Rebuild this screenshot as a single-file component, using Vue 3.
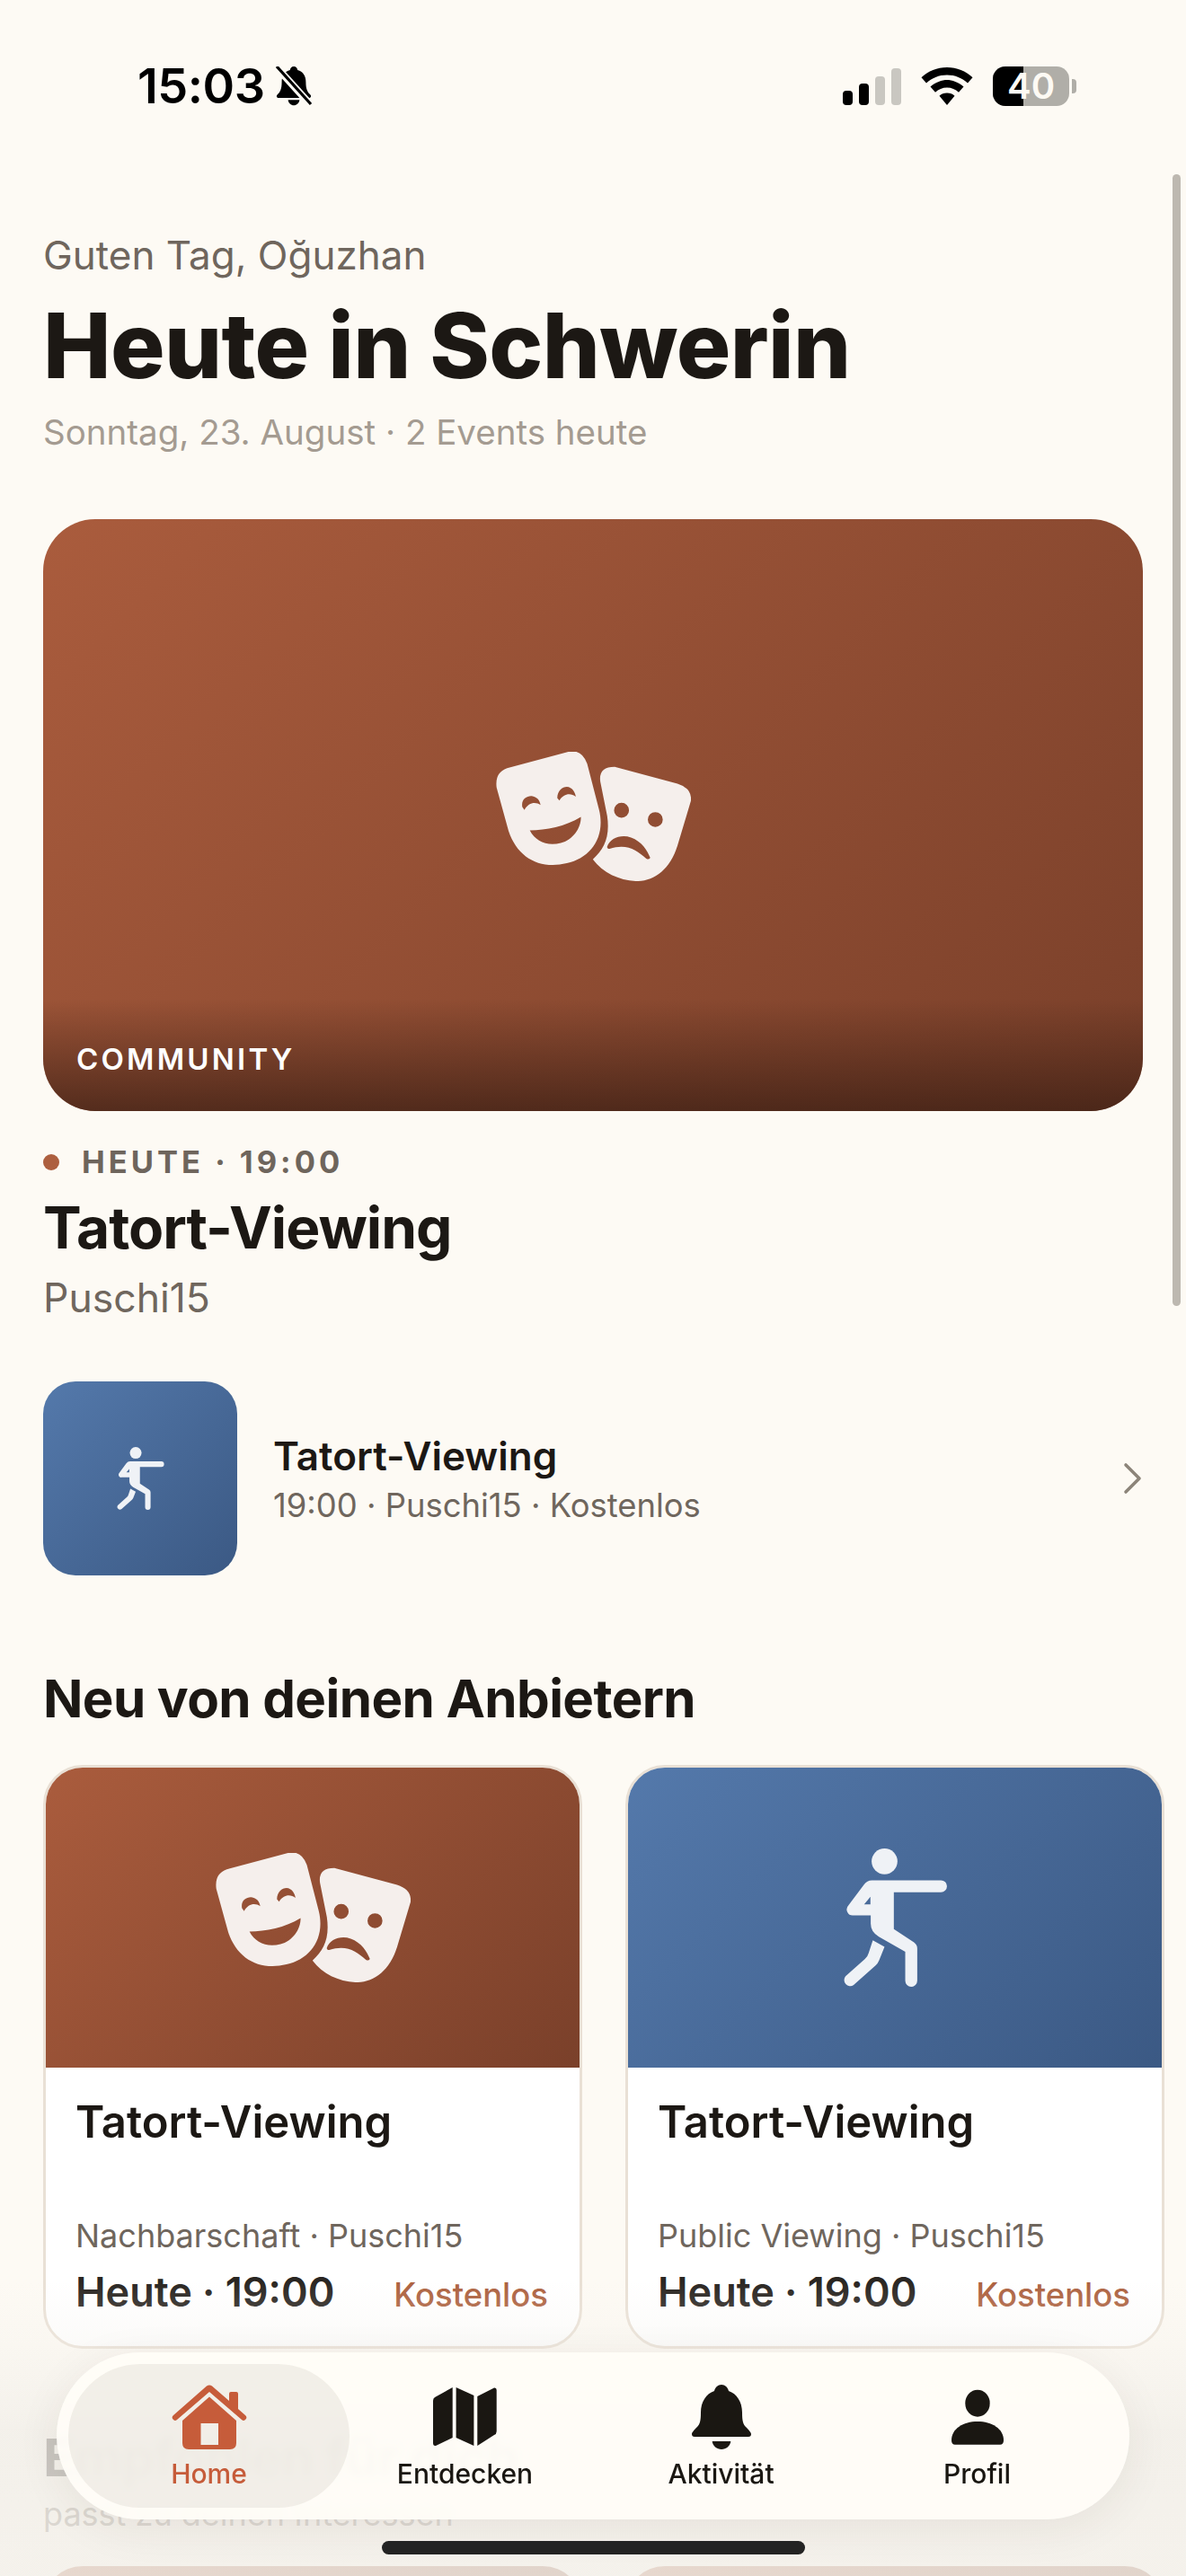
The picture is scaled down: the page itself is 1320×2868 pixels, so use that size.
<script setup>
const cards = [
  { cls: 'terra', title: 'Tatort-Viewing', meta: 'Nachbarschaft · Puschi15', icon: 'masks' },
  { cls: 'blue', title: 'Tatort-Viewing', meta: 'Public Viewing · Puschi15', icon: 'runner' },
]
</script>

<template>
  <div class="phone">
    <svg width="0" height="0" class="defs" aria-hidden="true">
      <defs>
        <symbol id="masks" viewBox="153 115 652 433">
          <path fill-rule="evenodd" d="M190 170 L395 115 Q440 105 458 155 L498 310 C520 400 470 470 390 488 C300 510 225 470 195 380 L155 235 Q148 185 190 170 Z M241 300 C236 275 255 262 272 263 C290 265 300 278 302 293 C285 282 262 284 248 310 Z M358 270 C358 245 375 232 390 232 C408 233 418 250 420 265 C402 252 380 254 365 278 Z M266 378 C320 378 385 365 437 333 C438 370 410 410 370 420 C325 432 285 415 266 378 Z"/>
          <path fill-rule="evenodd" d="M502 215 Q495 165 550 165 L760 222 Q810 238 805 280 L760 430 C735 510 680 550 620 548 C565 545 510 520 477 475 C515 440 535 400 525 330 Z M598 311 A25 25 0 1 1 548 311 A25 25 0 1 1 598 311 Z M711 342 A25 25 0 1 1 661 342 A25 25 0 1 1 711 342 Z M525 432 C535 405 570 390 605 402 C640 415 660 445 669 470 Q664 478 655 472 C625 445 590 420 533 440 Q524 440 525 432 Z"/>
        </symbol>
        <symbol id="runner" viewBox="178 79 344 461">
          <circle cx="314" cy="122" r="43"/>
          <path fill-rule="evenodd" d="M272 185 H502 A20 20 0 0 1 502 225 H345 V348 L412 392 Q423 400 423 412 V520 A20 20 0 0 1 383 520 V423 L295 373 Q268 358 268 330 V302 H210 A20 20 0 0 1 194 268 L245 200 Q256 185 272 185 Z M267 240 L246 265 H267 Z"/>
          <path d="M275 385 L314 407 L296 452 Q292 462 285 468 L211 534 A20 20 0 0 1 184 505 L248 448 Q258 440 261 428 Z"/>
        </symbol>
      </defs>
    </svg>

    <header class="status">
      <div class="status-left">
        <span class="clock">15:03</span>
        <svg class="bell-off" viewBox="0 0 44 44"><path d="M22 0c2.500 0 4 1.800 4.200 4 6 1.600 9.200 6.500 9.200 13.300 0 8 1.800 11.300 5 14.200 1.500 1.500.5 3.600-1.500 3.600H5.100c-2 0-3-2.100-1.500-3.600 3.200-2.900 5-6.200 5-14.200C8.600 10.500 11.800 5.600 17.800 4 18 1.800 19.500 0 22 0z"/><path d="M15.600 37.200h12.800c-.5 3.600-3.100 6-6.400 6s-5.900-2.400-6.400-6z"/><path d="M3 1l38 42" stroke="#fdfaf4" stroke-width="8"/><path d="M3 0l38 42" stroke="#000" stroke-width="3.200"/></svg>
      </div>
      <div class="status-right">
        <div class="signal"><i class="s1"></i><i class="s2"></i><i class="s3"></i><i class="s4"></i></div>
        <svg class="wifi" viewBox="0 0 58 42"><path d="M29 0C18 0 8 4.300 0.500 11.200L6 17.500C12 12 20.100 8.600 29 8.600S46 12 52 17.500L57.500 11.200C50 4.300 40 0 29 0Z"/><path d="M29 14C23.500 14 16 16.500 10.500 21.500L16 27.800C19.500 24.600 24 22.600 29 22.600S38.500 24.600 42 27.800L47.500 21.500C42 16.500 34.500 14 29 14Z"/><path d="M29 28.500C25.600 28.500 22.800 29.500 20.500 31.700L29 42L37.500 31.700C35.200 29.500 32.400 28.500 29 28.500Z"/></svg>
        <div class="battery"><div class="batt-body"><div class="batt-fill"></div><span>40</span></div><i class="batt-cap"></i></div>
      </div>
    </header>

    <main class="content">
      <section class="greeting">
        <p class="hello">Guten Tag, Oğuzhan</p>
        <h1>Heute in Schwerin</h1>
        <p class="date">Sonntag, 23. August · 2 Events heute</p>
      </section>

      <section class="hero">
        <div class="hero-art terra">
          <svg class="masks hero-masks"><use href="#masks"/></svg>
          <div class="hero-shade"></div>
          <span class="hero-label">COMMUNITY</span>
        </div>
        <div class="when"><i class="dot"></i><span>HEUTE · 19:00</span></div>
        <h2>Tatort-Viewing</h2>
        <p class="host">Puschi15</p>
      </section>

      <section class="row">
        <div class="thumb blue">
          <svg class="runner thumb-runner"><use href="#runner"/></svg>
        </div>
        <div class="row-text">
          <div class="row-title">Tatort-Viewing</div>
          <div class="row-meta">19:00 · Puschi15 · Kostenlos</div>
        </div>
        <svg class="chev" viewBox="0 0 22 36"><path d="M3 3l15 15L3 33" fill="none" stroke="#8c8479" stroke-width="3.600" stroke-linecap="round" stroke-linejoin="round"/></svg>
      </section>

      <section class="providers">
        <h3>Neu von deinen Anbietern</h3>
        <div class="cards">
          <article v-for="(c, i) in cards" :key="i" class="card">
            <div class="card-art" :class="c.cls">
              <svg v-if="c.icon === 'masks'" class="masks"><use href="#masks"/></svg>
              <svg v-else class="runner card-runner"><use href="#runner"/></svg>
            </div>
            <div class="card-body">
              <div class="card-title">{{ c.title }}</div>
              <div class="card-meta">{{ c.meta }}</div>
              <div class="card-foot"><span class="card-time">Heute · 19:00</span><span class="card-price">Kostenlos</span></div>
            </div>
          </article>
        </div>
      </section>

      <section class="foryou">
        <h3>Empfohlen für dich</h3>
        <p class="foryou-sub">passt zu deinen Interessen</p>
        <div class="stubs"><div class="stub terra"></div><div class="stub terra"></div></div>
      </section>
    </main>

    <div class="scrollbar"></div>
    <div class="fade"></div>

    <nav class="tabbar">
      <div class="tab active">
        <svg viewBox="0 0 90 72"><path d="M42 1.500 Q45 -0.500 48 1.500 L67 18 V10 Q67 8 69 8 H75 Q77 8 77 10 V27 L85 34 A3.200 3.200 0 0 1 81 39 L45 8 L9 39 A3.200 3.200 0 0 1 5 34 Z"/><path fill-rule="evenodd" d="M45 13.500 L75 40 V65 Q75 72 68 72 H22 Q15 72 15 65 V40 Z M35.500 43 V67 H55 V43 Z"/></svg>
        <span>Home</span>
      </div>
      <div class="tab">
        <svg viewBox="0 0 90 72"><path d="M30.700 3 V59 L12 68 Q9 68.500 9 65 V18 Q9 15 11 14 Z"/><path d="M34.600 3 L54.400 12 V68 L34.600 59 Z"/><path d="M58.300 13 L77 3.500 Q79.700 3 79.700 6 V52 Q79.700 55 77 56 L58.300 68 Z"/></svg>
        <span>Entdecken</span>
      </div>
      <div class="tab">
        <svg viewBox="0 0 90 72"><path d="M45 0 C49 0 52 3 53 7 C62 10 68 19 68 31 C68 40 69 44 72 47 C75 50 78 53 78 55 Q78 58 75 58 H15 Q12 58 12 55 C12 53 15 50 18 47 C21 44 22 40 22 31 C22 19 28 10 37 7 C38 3 41 0 45 0 Z"/><path d="M34.700 63 H55.300 C55 68 50 72 45 72 S35 68 34.700 63 Z"/></svg>
        <span>Aktivität</span>
      </div>
      <div class="tab">
        <svg viewBox="0 0 90 72"><ellipse cx="45" cy="20.700" rx="13.700" ry="15"/><path d="M16 62 C16 49 29 41 45 41 S74 49 74 62 Q74 66.700 70 66.700 H20 Q16 66.700 16 62 Z"/></svg>
        <span>Profil</span>
      </div>
    </nav>
    <div class="home-bar"></div>
  </div>
</template>

<style>
html, body { margin: 0; padding: 0; background: #fdfaf4; }
</style>

<style scoped>
.phone { position: relative; width: 1320px; height: 2868px; overflow: hidden; background: #fdfaf4; font-family: Inter, "Liberation Sans", sans-serif; color: #1c1814; }
.defs { position: absolute; }

.status { height: 190px; box-sizing: border-box; padding: 74px 122px 0 153px; display: flex; justify-content: space-between; align-items: flex-start; }
.status-left { display: flex; align-items: center; gap: 10px; height: 44px; }
.clock { font-size: 54px; line-height: 44px; font-weight: 600; color: #000; letter-spacing: -.5px; }
.bell-off { width: 44px; height: 44px; }
.status-right { display: flex; align-items: center; gap: 22px; height: 44px; }
.signal { display: flex; align-items: flex-end; gap: 7px; height: 41px; }
.signal i { width: 11px; border-radius: 4px; display: block; }
.s1 { height: 16px; background: #000; }
.s2 { height: 24px; background: #000; }
.s3 { height: 32px; background: #c9c7c1; }
.s4 { height: 41px; background: #c9c7c1; }
.wifi { width: 58px; height: 42px; }
.battery { display: flex; align-items: center; gap: 3px; }
.batt-body { position: relative; width: 85px; height: 44px; border-radius: 14px; background: #b0aea8; display: flex; align-items: center; justify-content: center; }
.batt-fill { position: absolute; inset: 0 auto 0 0; width: 34px; background: #000; border-radius: 14px 0 0 14px; }
.batt-body span { position: relative; font-size: 40px; font-weight: 600; color: #fdfaf4; line-height: 44px; }
.batt-cap { width: 5px; height: 16px; background: #b0aea8; border-radius: 0 4px 4px 0; display: block; }

.content { padding: 0 48px; }
.greeting { height: 388px; box-sizing: border-box; padding-top: 68px; }
.hello { margin: 0; font-size: 44px; line-height: 52px; color: #6f665d; font-weight: 400; }
h1 { margin: 19px 0 0; font-size: 101px; line-height: 110px; font-weight: 800; letter-spacing: -.6px; color: #1c1814; white-space: nowrap; }
.date { margin: 19px 0 0; font-size: 38.500px; line-height: 46px; color: #a49b91; }

.hero-art { position: relative; height: 659px; border-radius: 58px; overflow: hidden; display: flex; align-items: center; justify-content: center; }
.terra { background: linear-gradient(135deg, #aa5c3d, #7a402a); }
.blue { background: linear-gradient(135deg, #5479ab, #3b5984); }
.masks { width: 217px; height: 144px; fill: #f5efec; }
.hero-masks { margin-top: 3px; }
.hero-shade { position: absolute; left: 0; right: 0; bottom: 0; height: 125px; background: linear-gradient(to bottom, rgba(50,25,15,0), rgba(55,28,18,.7)); }
.hero-label { position: absolute; left: 37px; bottom: 40px; font-size: 33px; line-height: 36px; font-weight: 600; letter-spacing: 3.200px; color: #fff; }
.when { margin-top: 37px; display: flex; align-items: center; gap: 25px; font-size: 34.500px; line-height: 40px; font-weight: 700; letter-spacing: 4px; color: #6e655c; }
.dot { width: 18px; height: 18px; border-radius: 50%; background: #ad5f3f; display: block; }
h2 { margin: 17px 0 0; font-size: 64px; line-height: 72px; font-weight: 700; letter-spacing: -1px; color: #1c1814; }
.host { margin: 17px 0 0; font-size: 44.500px; line-height: 50px; color: #6f665d; }

.row { margin-top: 68px; display: flex; align-items: center; }
.thumb { width: 216px; height: 216px; border-radius: 36px; display: flex; align-items: center; justify-content: center; flex: none; }
.runner { fill: #eff2f6; }
.thumb-runner { width: 53px; height: 70px; }
.row-text { margin-left: 40px; flex: 1; }
.row-title { font-size: 44px; line-height: 54px; font-weight: 600; color: #1c1814; }
.row-meta { margin-top: 6px; font-size: 36.400px; line-height: 44px; color: #6f665d; }
.chev { width: 22px; height: 36px; }

.providers { margin-top: 103px; }
h3 { margin: 0; font-size: 58.300px; line-height: 68px; font-weight: 700; letter-spacing: -.6px; color: #1c1814; white-space: nowrap; }
.cards { margin-top: 40px; display: flex; gap: 48px; width: 1500px; }
.card { width: 600px; height: 650px; box-sizing: border-box; border: 3px solid #e9e0d5; border-radius: 44px; background: #fff; overflow: hidden; flex: none; display: flex; flex-direction: column; }
.card-art { height: 334px; display: flex; align-items: center; justify-content: center; flex: none; }
.card-runner { width: 115px; height: 154px; }
.card-body { flex: 1; padding: 30px 35px 0 33px; display: flex; flex-direction: column; }
.card-title { font-size: 49px; line-height: 62px; font-weight: 600; color: #1c1814; }
.card-meta { margin-top: 73px; font-size: 36px; line-height: 44px; color: #6f665d; }
.card-foot { margin-top: 14px; display: flex; justify-content: space-between; align-items: baseline; }
.card-time { font-size: 45px; line-height: 54px; font-weight: 600; color: #2a2622; }
.card-price { font-size: 36.500px; line-height: 44px; font-weight: 500; color: #ad6240; }

.foryou { margin-top: 87px; }
.foryou-sub { margin: 7px 0 0; font-size: 36px; line-height: 44px; color: #6f665d; }
.stubs { margin-top: 36px; display: flex; gap: 48px; width: 1300px; }
.stub { width: 600px; height: 200px; border-radius: 44px; flex: none; }

.scrollbar { position: absolute; right: 6px; top: 194px; width: 9px; height: 1260px; border-radius: 5px; background: #bdb8b0; }
.fade { position: absolute; left: 0; right: 0; top: 2540px; bottom: 0; background: linear-gradient(to bottom, rgba(243,240,234,0), rgba(243,240,234,.3) 70px, rgba(241,238,232,.8) 170px, rgba(243,240,234,.84) 100%); }

.tabbar { position: absolute; left: 63px; top: 2619px; width: 1194px; height: 186px; border-radius: 93px; background: rgba(255,253,248,.93); backdrop-filter: blur(4px); box-shadow: 0 10px 50px rgba(60,45,30,.07); display: grid; grid-template-columns: repeat(4, 285px); box-sizing: border-box; padding: 13px 0 13px 27px; }
.tab { position: relative; display: flex; flex-direction: column; align-items: center; gap: 10px; padding-top: 23px; fill: #1a1712; color: #1a1712; font-size: 30px; line-height: 34px; font-weight: 500; }
.tab svg { width: 90px; height: 72px; display: block; position: relative; }
.tab span { position: relative; }
.tab.active { fill: #c65c3a; color: #c65c3a; }
.tab.active::before { content: ""; position: absolute; top: 0; bottom: 0; left: -14px; right: -14px; border-radius: 80px; background: rgba(90,75,55,.08); }
.home-bar { position: absolute; left: 425px; top: 2829px; width: 471px; height: 15px; border-radius: 8px; background: #232323; }
</style>
